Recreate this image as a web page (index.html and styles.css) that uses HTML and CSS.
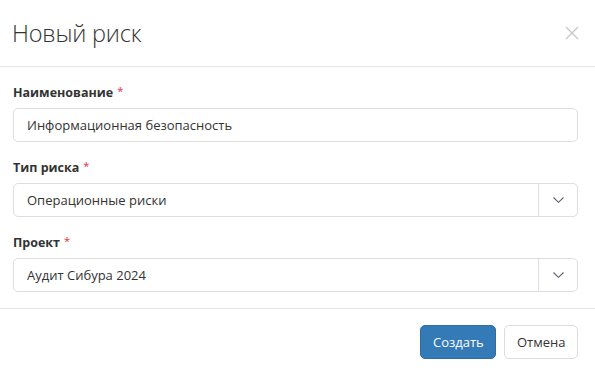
FILE: index.html
```html
<!DOCTYPE html>
<html lang="ru">
<head>
    <meta charset="UTF-8">
    <title>Новый риск</title>
    <link rel="stylesheet" href="styles.css">
</head>
<body>
    <div class="modal">
        <!-- шапка -->
        <div class="modal-header">
            <h4 class="modal-title">Новый риск</h4>
            <button class="close-btn" aria-label="Закрыть">
                <svg width="14" height="14" viewBox="0 0 14 14"><path d="M1 1L13 13M13 1L1 13" stroke="#c8c8c8" stroke-width="1.4"/></svg>
            </button>
        </div>

        <!-- форма -->
        <div class="modal-body">
            <div class="field">
                <label class="field-label">Наименование<span class="req">*</span></label>
                <div class="input">Информационная безопасность</div>
            </div>
            <div class="field">
                <label class="field-label">Тип риска<span class="req">*</span></label>
                <div class="select">
                    <div class="select-value">Операционные риски</div>
                    <div class="select-arrow">
                        <svg width="11" height="6" viewBox="0 0 11 6"><path d="M0.5 0.5L5.5 5.3L10.5 0.5" fill="none" stroke="#5b6470" stroke-width="1.1"/></svg>
                    </div>
                </div>
            </div>
            <div class="field">
                <label class="field-label">Проект<span class="req">*</span></label>
                <div class="select">
                    <div class="select-value">Аудит Сибура 2024</div>
                    <div class="select-arrow">
                        <svg width="11" height="6" viewBox="0 0 11 6"><path d="M0.5 0.5L5.5 5.3L10.5 0.5" fill="none" stroke="#5b6470" stroke-width="1.1"/></svg>
                    </div>
                </div>
            </div>
        </div>

        <!-- кнопки -->
        <div class="modal-footer">
            <button class="btn btn-primary">Создать</button>
            <button class="btn btn-default">Отмена</button>
        </div>
    </div>
</body>
</html>
```

FILE: styles.css
```css
body {
    margin: 0;
    padding: 0;
    font-family: "Segoe UI", "Open Sans", "Noto Sans", sans-serif;
    background: #fff;
    color: #333;
}

.modal {
    width: 595px;
    background: #fff;
}

/* шапка */
.modal-header {
    height: 66px;
    display: flex;
    align-items: center;
    justify-content: space-between;
    padding: 0 16px 0 12px;
    border-bottom: 1px solid #e5e5e5;
}
.modal-title {
    margin: 0;
    font-size: 23.5px;
    font-weight: 300;
    color: #333;
    letter-spacing: -0.2px;
}
.close-btn {
    background: none;
    border: none;
    padding: 0;
    width: 14px;
    height: 14px;
    cursor: pointer;
}

/* форма */
.modal-body {
    display: flex;
    flex-direction: column;
    gap: 17px;
    padding: 17px 17px 16px 13px;
    border-bottom: 1px solid #e5e5e5;
}
.field {
    display: flex;
    flex-direction: column;
    gap: 6px;
}
.field-label {
    font-size: 12.5px;
    font-weight: 700;
    line-height: 18px;
    height: 18px;
    color: #333;
}
.req {
    color: #e0303a;
    font-weight: 400;
    font-size: 11px;
    line-height: 0;
    margin-left: 4px;
    vertical-align: 2px;
}
.input, .select {
    height: 32px;
    border: 1px solid #dedede;
    border-radius: 5px;
    font-size: 13px;
    color: #333;
    display: flex;
    align-items: center;
}
.input {
    padding-left: 13px;
}
.select-value {
    flex: 1;
    padding-left: 13px;
}
.select-arrow {
    width: 38px;
    height: 100%;
    border-left: 1px solid #dedede;
    display: flex;
    align-items: center;
    justify-content: center;
}

/* кнопки */
.modal-footer {
    display: flex;
    justify-content: flex-end;
    gap: 8px;
    padding: 16px 17px;
}
.btn {
    height: 34px;
    padding: 0 12px;
    border-radius: 5px;
    font-family: inherit;
    font-size: 13px;
    cursor: pointer;
}
.btn-primary {
    background: #337ab7;
    border: 1px solid #2e6da4;
    color: #fff;
    width: 76px;
}
.btn-default {
    background: #fff;
    border: 1px solid #dcdcdc;
    color: #333;
    width: 74px;
}
```
